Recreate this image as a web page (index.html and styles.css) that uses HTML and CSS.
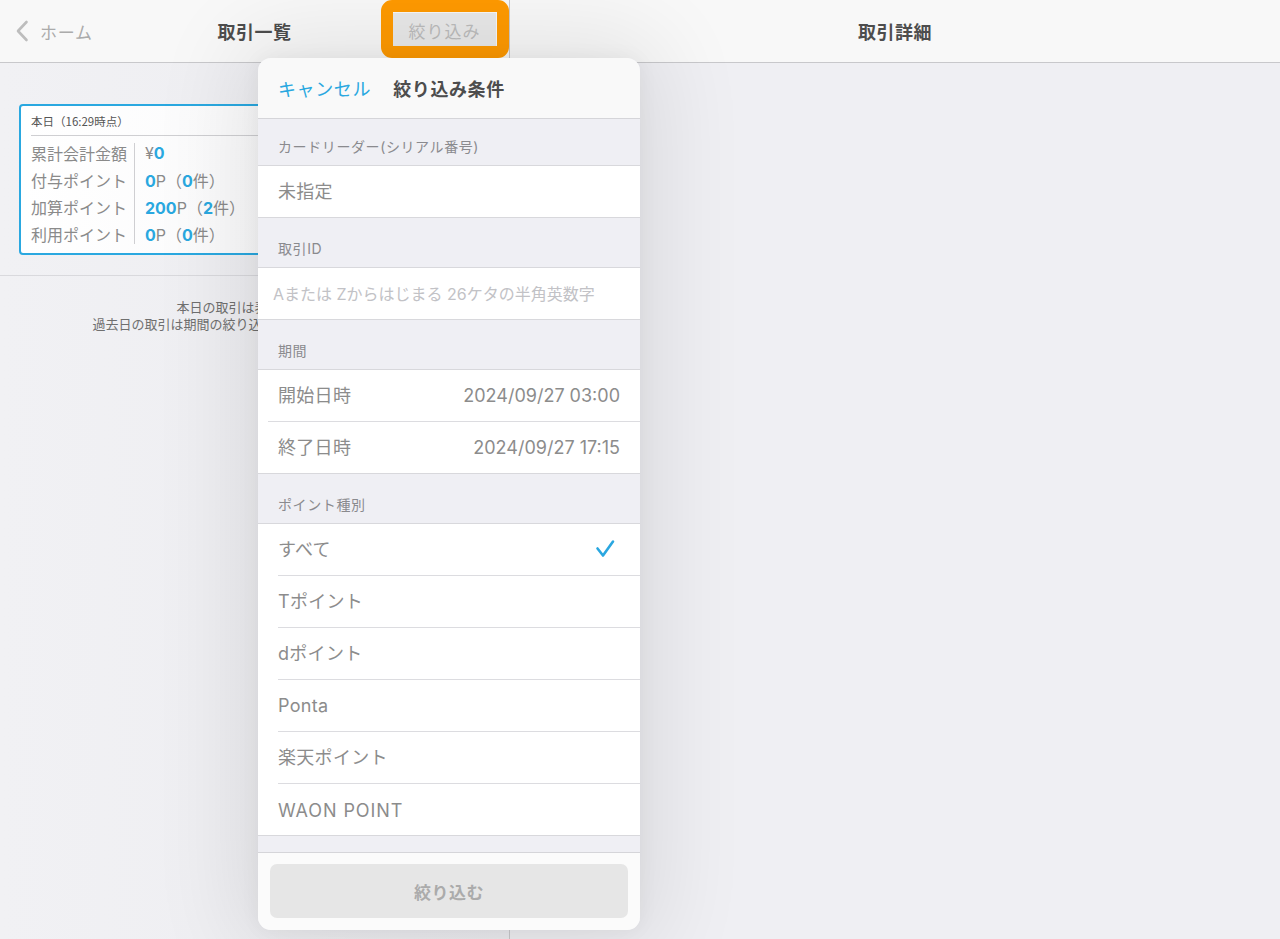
FILE: index.html
```html
<!DOCTYPE html>
<html lang="ja">
<head>
<meta charset="utf-8">
<title>取引一覧</title>
<link rel="stylesheet" href="styles.css">
</head>
<body>
<div class="app">
  <section class="pane pane-left">
    <header class="nav">
      <div class="nav-left">
        <svg class="chev" width="14" height="22" viewBox="0 0 14 22"><path d="M11.5 2 L3 11 L11.5 20" fill="none" stroke="#bdbdbd" stroke-width="2.6" stroke-linecap="round" stroke-linejoin="round"/></svg>
        <span class="back-text">ホーム</span>
      </div>
      <div class="nav-title">取引一覧</div>
      <div class="nav-right"><div class="nav-action">絞り込み</div></div>
    </header>
    <div class="summary">
      <div class="card">
        <div class="card-head">本日（16:29時点）</div>
        <div class="card-grid">
          <div class="lbl">累計会計金額</div>
          <div class="vsep"></div>
          <div class="val">¥<b>0</b></div>
          <div class="lbl">付与ポイント</div>
          <div class="val"><b>0</b>P（<b>0</b>件）</div>
          <div class="lbl">加算ポイント</div>
          <div class="val"><b>200</b>P（<b>2</b>件）</div>
          <div class="lbl">利用ポイント</div>
          <div class="val"><b>0</b>P（<b>0</b>件）</div>
        </div>
      </div>
    </div>
    <div class="note">
      <p>本日の取引は表示済みです</p>
      <p>過去日の取引は期間の絞り込みから検索してください。</p>
    </div>
  </section>
  <section class="pane pane-right">
    <header class="nav nav-single">
      <div class="nav-title">取引詳細</div>
    </header>
  </section>

  <div class="highlight"></div>

  <div class="popover">
    <div class="pop-head">
      <span class="cancel">キャンセル</span>
      <span class="pop-title">絞り込み条件</span>
      <span></span>
    </div>
    <div class="pop-body">
      <div class="sec-label first">カードリーダー(シリアル番号)</div>
      <div class="group">
        <div class="row"><span class="row-text jp">未指定</span></div>
      </div>
      <div class="sec-label">取引ID</div>
      <div class="group">
        <div class="row row-input"><span class="placeholder">Aまたは Zからはじまる 26ケタの半角英数字</span></div>
      </div>
      <div class="sec-label">期間</div>
      <div class="group">
        <div class="row row-date sep-short"><span class="row-text jp">開始日時</span><span class="row-value">2024/09/27 03:00</span></div>
        <div class="row row-date"><span class="row-text jp">終了日時</span><span class="row-value">2024/09/27 17:15</span></div>
      </div>
      <div class="sec-label">ポイント種別</div>
      <div class="group">
        <div class="row sep"><span class="row-text jp">すべて</span>
          <svg class="check" width="20" height="20" viewBox="0 0 20 20"><path d="M2.5 9.5 L8 16.5 L18 2.5" fill="none" stroke="#2aa7e0" stroke-width="2.6" stroke-linecap="round" stroke-linejoin="round"/></svg>
        </div>
        <div class="row sep"><span class="row-text jp">Tポイント</span></div>
        <div class="row sep"><span class="row-text jp">dポイント</span></div>
        <div class="row sep"><span class="row-text">Ponta</span></div>
        <div class="row sep"><span class="row-text jp">楽天ポイント</span></div>
        <div class="row"><span class="row-text latin">WAON POINT</span></div>
      </div>
    </div>
    <div class="pop-foot">
      <div class="apply">絞り込む</div>
    </div>
  </div>
</div>
</body>
</html>
```

FILE: styles.css
```css
* { box-sizing: border-box; }
html, body { margin: 0; padding: 0; }
body {
  width: 1280px;
  height: 939px;
  overflow: hidden;
  background: #eeeef2;
  font-family: "Inter", "Noto Sans CJK JP", sans-serif;
  color: #888;
}
p { margin: 0; }

.app {
  position: relative;
  display: flex;
  width: 1280px;
  height: 939px;
}

.pane { height: 939px; }
.pane-left {
  width: 510px;
  border-right: 1px solid #c9c9cc;
  background: linear-gradient(90deg, #f1f1f4 0%, #ececf0 100%);
}
.pane-right {
  flex: 1;
  background: #efeff3;
}

.nav {
  height: 63px;
  border-bottom: 1px solid #c8c8cb;
  background: #f8f8f8;
  display: grid;
  grid-template-columns: 1fr auto 1fr;
  align-items: center;
}
.nav-single { display: flex; justify-content: center; }

.nav-left {
  display: flex;
  align-items: center;
  padding-left: 15px;
  gap: 11px;
}
.chev { display: block; }
.back-text {
  font-size: 17px;
  color: #ababab;
  letter-spacing: 0.8px;
}
.nav-title {
  font-family: "Noto Sans CJK JP", sans-serif;
  font-weight: 700;
  font-size: 18px;
  color: #4d4d4d;
  letter-spacing: 0.5px;
}
.nav-right {
  display: flex;
  justify-content: flex-end;
  padding-right: 13px;
}
.nav-action {
  width: 103px;
  height: 33px;
  margin-top: -4px;
  padding-top: 2px;
  background: #e9e9e9;
  display: flex;
  align-items: center;
  justify-content: center;
  font-size: 17px;
  color: #bcbcbc;
  letter-spacing: 1px;
}

.highlight {
  position: absolute;
  left: 381px;
  top: 0;
  width: 128px;
  height: 58px;
  border: 12px solid #ff9a00;
  border-radius: 11px;
}

/* summary card */
.summary {
  padding: 41px 19px 20px;
  border-bottom: 1px solid #d9d9dd;
}
.card {
  border: 2px solid #2aa8e0;
  border-radius: 4px;
  background: linear-gradient(90deg, #ffffff 0%, #f6f6f8 100%);
  padding: 0 12px 4px 10px;
  height: 151px;
}
.card-head {
  height: 30px;
  line-height: 30px;
  font-size: 11.5px;
  color: #555;
  border-bottom: 1px solid #cfcfd2;
  font-family: "Noto Sans CJK JP", sans-serif;
}
.card-grid {
  display: grid;
  grid-template-columns: 103px 1px auto;
  grid-auto-rows: 27px;
  margin-top: 3px;
  align-items: center;
}
.lbl {
  font-family: "Noto Sans CJK JP", sans-serif;
  font-size: 16px;
  color: #8a8a8a;
  grid-column: 1;
}
.vsep {
  grid-column: 2;
  grid-row: 1 / 5;
  align-self: stretch;
  margin: 4px 0 3px;
  background: #cfcfd2;
}
.val {
  grid-column: 3;
  padding-left: 10px;
  font-size: 16px;
  color: #8a8a8a;
}
.val b { color: #2aa8e0; font-weight: 700; }

.note {
  padding-top: 23px;
  text-align: center;
  font-size: 13px;
  line-height: 17px;
  color: #6f6f6f;
}

/* popover */
.popover {
  position: absolute;
  left: 258px;
  top: 58px;
  width: 382px;
  height: 872px;
  border-radius: 13px;
  overflow: hidden;
  background: #efeff4;
  display: flex;
  flex-direction: column;
  box-shadow: 0 0 90px 20px rgba(0, 0, 0, 0.09), 0 0 20px rgba(0, 0, 0, 0.05);
}
.pop-head {
  height: 61px;
  flex: none;
  background: #f9f9f9;
  border-bottom: 1px solid #d5d5d9;
  display: grid;
  grid-template-columns: 1fr auto 1fr;
  align-items: center;
  padding: 0 20px;
}
.cancel {
  font-size: 18px;
  color: #2aa8e0;
  letter-spacing: 0.6px;
}
.pop-title {
  font-family: "Noto Sans CJK JP", sans-serif;
  font-weight: 700;
  font-size: 18px;
  color: #4d4d4d;
  letter-spacing: 0.6px;
}
.pop-body {
  flex: 1;
  background: #efeff4;
}
.sec-label {
  height: 49px;
  display: flex;
  align-items: flex-end;
  padding: 0 20px 10px;
  font-size: 14px;
  line-height: 16px;
  color: #8a8a8e;
  letter-spacing: 0.6px;
}
.sec-label.first { height: 46px; }
.group {
  background: #fff;
  border-top: 1px solid #d8d8dc;
  border-bottom: 1px solid #d8d8dc;
}
.row {
  position: relative;
  height: 51px;
  display: flex;
  align-items: center;
  justify-content: space-between;
  padding: 0 20px;
}
.row.sep, .row.sep-short { height: 52px; border-bottom: 1px solid transparent; }
.row.sep::after, .row.sep-short::after {
  content: "";
  position: absolute;
  left: 20px;
  right: 0;
  bottom: -1px;
  height: 1px;
  background: #dcdce0;
}
.row.sep-short::after { left: 10px; }
.row-text {
  font-size: 18px;
  color: #8c8c8c;
  letter-spacing: 0.3px;
}
.row-text.jp { margin-top: -3px; }
.row-text.latin { margin-top: 2px; letter-spacing: 0.9px; }
.row-value {
  font-size: 18px;
  color: #8c8c8c;
}
.row-input { padding-left: 15px; }
.placeholder {
  font-size: 16px;
  color: #c2c2c6;
  margin-top: -2px;
}
.check { display: block; margin-right: 5px; margin-top: -2px; }

.pop-foot {
  flex: none;
  height: 78px;
  margin-top: 0;
  border-top: 1px solid #d5d5d9;
  background: #fbfbfb;
  padding: 11px 12px 12px;
}
.apply {
  height: 54px;
  border-radius: 7px;
  background: #e6e6e6;
  display: flex;
  align-items: center;
  justify-content: center;
  font-family: "Noto Sans CJK JP", sans-serif;
  font-weight: 700;
  font-size: 17px;
  color: #ababab;
  letter-spacing: 0.5px;
}
```
